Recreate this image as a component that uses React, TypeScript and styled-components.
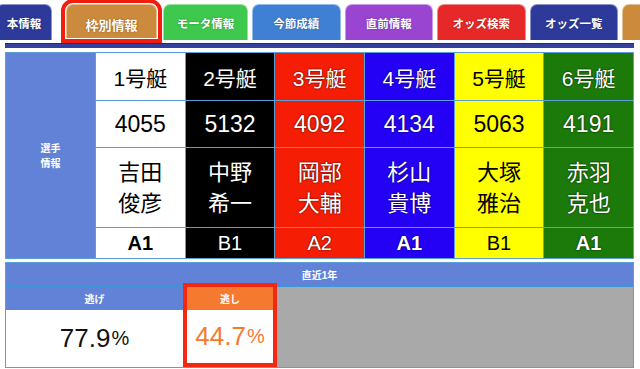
import React from "react";
import styled, { createGlobalStyle, css } from "styled-components";

const GlobalStyle = createGlobalStyle`
  body {
    margin: 0;
    background: #fff;
    font-family: "Liberation Sans", "Noto Sans CJK JP", sans-serif;
  }
`;

const Page = styled.div`
  width: 640px;
  height: 369px;
  overflow: hidden;
`;

const TabBar = styled.nav`
  display: flex;
  align-items: flex-start;
  gap: 4px;
  padding-top: 4px;
  height: 40px;
  box-sizing: border-box;
`;

type TabProps = {
  $color: string;
  $width?: number;
  $active?: boolean;
};

const Tab = styled.div<TabProps>`
  flex: 0 0 ${props => props.$width ?? 88.5}px;
  height: 36px;
  box-sizing: border-box;
  display: flex;
  align-items: center;
  justify-content: center;
  background: ${props => props.$color};
  border: 1px solid rgba(255, 255, 255, 0.45);
  border-bottom: none;
  border-radius: 7px 7px 0 0;
  color: #fff;
  font-size: 11.5px;
  font-weight: bold;
  text-shadow: 0 0 2px rgba(0, 0, 0, 0.35);
  white-space: nowrap;
  overflow: hidden;

  ${props => props.$active && css`
    height: 34px;
    padding-top: 5px;
    margin: 0 2px 0 10px;
    font-size: 13px;
    outline: 4px solid #f21d0d;
    outline-offset: 1px;
    overflow: visible;
  `}
`;

const Rule = styled.div`
  margin: 3px 6px 0 5px;
  height: 5px;
  box-sizing: border-box;
  background: #34409f;
  border-top: 1px solid #1f2a85;
`;

const Content = styled.main`
  margin: 4px 6px 0 5px;
`;

const PlayerGrid = styled.div`
  display: grid;
  grid-template-columns: 89px repeat(6, 1fr);
  grid-template-rows: 47px 46px 79px 30px;
  gap: 1px;
  background: #5b9fd6;
  border: 1px solid #5b9fd6;
`;

const SideLabel = styled.div`
  grid-row: 1 / span 4;
  background: #6282d8;
  color: #fff;
  font-size: 10px;
  font-weight: bold;
  line-height: 15px;
  display: flex;
  align-items: center;
  justify-content: center;
  text-align: center;
`;

type CellProps = {
  $bg: string;
  $fg: string;
};

const Cell = styled.div<CellProps>`
  background: ${props => props.$bg};
  color: ${props => props.$fg};
  display: flex;
  flex-direction: column;
  align-items: center;
  justify-content: center;
  text-shadow: ${props => (props.$fg === "#fff" ? "0 0 2px rgba(0, 0, 0, 0.9)" : "none")};
`;

const BoatCell = styled(Cell)`
  font-size: 21px;
`;

const NumberCell = styled(Cell)`
  font-size: 23px;
`;

const NameCell = styled(Cell)`
  font-size: 22px;
  line-height: 31px;
`;

const ClassCell = styled(Cell)<{ $strong: boolean }>`
  font-size: 20px;
  font-weight: ${props => (props.$strong ? "bold" : "normal")};
`;

const Recent = styled.section`
  margin-top: 3px;
  border: 1px solid #5b9fd6;
`;

const RecentTitle = styled.div`
  height: 23px;
  background: #6282d8;
  border-bottom: 1px dotted #3b95d8;
  color: #fff;
  font-size: 10px;
  font-weight: bold;
  display: flex;
  align-items: center;
  justify-content: center;
`;

const StatRow = styled.div`
  display: grid;
  grid-template-columns: 177px 94px 1fr;
  height: 80px;
`;

const StatCell = styled.div<{ $highlight?: boolean }>`
  display: flex;
  flex-direction: column;
  background: #fff;

  ${props => props.$highlight && css`
    position: relative;
    z-index: 1;
    margin-top: -4px;
    border: 4px solid #f42812;
  `}
`;

const StatHeader = styled.div<{ $bg: string }>`
  flex: 0 0 23px;
  background: ${props => props.$bg};
  color: #fff;
  font-size: 10px;
  font-weight: bold;
  display: flex;
  align-items: center;
  justify-content: center;
`;

const StatValue = styled.div<{ $color: string }>`
  flex: 1;
  display: flex;
  align-items: center;
  justify-content: center;
  color: ${props => props.$color};
  font-size: 26px;
`;

const Percent = styled.span`
  font-size: 20px;
  margin-left: 1px;
`;

const Blank = styled.div`
  background: #a9a9a9;
`;

// the strip is scrolled: the first tab is cut at the left edge, the last at the right
const tabs = [
  { label: "本情報", color: "#2e3a9a", width: 56 },
  { label: "枠別情報", color: "#cc8a3c", width: 91, active: true },
  { label: "モータ情報", color: "#3ec84e", width: 85 },
  { label: "今節成績", color: "#3f80d4" },
  { label: "直前情報", color: "#9a45d2" },
  { label: "オッズ検索", color: "#e62828" },
  { label: "オッズ一覧", color: "#2e3a9a" },
  { label: "", color: "#cc8a3c" },
];

const boats = [
  { no: 1, bg: "#fff", fg: "#000", reg: "4055", name: ["吉田", "俊彦"], cls: "A1" },
  { no: 2, bg: "#000", fg: "#fff", reg: "5132", name: ["中野", "希一"], cls: "B1" },
  { no: 3, bg: "#f51e05", fg: "#fff", reg: "4092", name: ["岡部", "大輔"], cls: "A2" },
  { no: 4, bg: "#2400f5", fg: "#fff", reg: "4134", name: ["杉山", "貴博"], cls: "A1" },
  { no: 5, bg: "#ffff00", fg: "#000", reg: "5063", name: ["大塚", "雅治"], cls: "B1" },
  { no: 6, bg: "#1c7a0a", fg: "#fff", reg: "4191", name: ["赤羽", "克也"], cls: "A1" },
];

export default function App() {
  return (
    <Page>
      <GlobalStyle />
      <TabBar>
        {tabs.map((tab, i) => (
          <Tab
            key={i}
            $color={tab.color}
            $width={tab.width}
            $active={tab.active}
            style={i === 0 ? { marginLeft: -4 } : undefined}
          >
            {tab.label}
          </Tab>
        ))}
      </TabBar>
      <Rule />
      <Content>
        <PlayerGrid>
          <SideLabel>
            選手
            <br />
            情報
          </SideLabel>
          {boats.map(b => (
            <BoatCell key={`no${b.no}`} $bg={b.bg} $fg={b.fg}>
              {b.no}号艇
            </BoatCell>
          ))}
          {boats.map(b => (
            <NumberCell key={`reg${b.no}`} $bg={b.bg} $fg={b.fg}>
              {b.reg}
            </NumberCell>
          ))}
          {boats.map(b => (
            <NameCell key={`name${b.no}`} $bg={b.bg} $fg={b.fg}>
              <span>{b.name[0]}</span>
              <span>{b.name[1]}</span>
            </NameCell>
          ))}
          {boats.map(b => (
            <ClassCell key={`cls${b.no}`} $bg={b.bg} $fg={b.fg} $strong={b.cls === "A1"}>
              {b.cls}
            </ClassCell>
          ))}
        </PlayerGrid>
        <Recent>
          <RecentTitle>直近1年</RecentTitle>
          <StatRow>
            <StatCell>
              <StatHeader $bg="#6282d8">逃げ</StatHeader>
              <StatValue $color="#111">
                77.9<Percent>%</Percent>
              </StatValue>
            </StatCell>
            <StatCell $highlight>
              <StatHeader $bg="#f57a30">逃し</StatHeader>
              <StatValue $color="#f57a30">
                44.7<Percent>%</Percent>
              </StatValue>
            </StatCell>
            <Blank />
          </StatRow>
        </Recent>
      </Content>
    </Page>
  );
}
